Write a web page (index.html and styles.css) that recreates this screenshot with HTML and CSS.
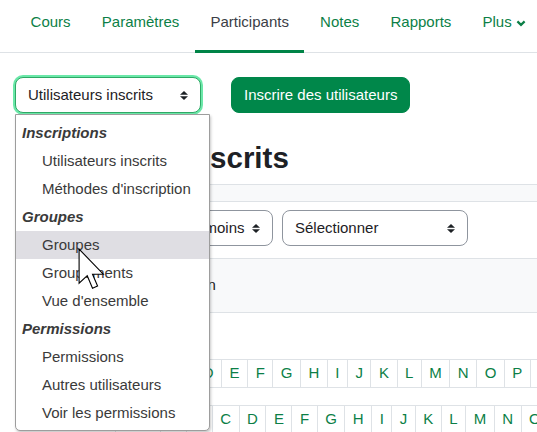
FILE: index.html
```html
<!DOCTYPE html>
<html lang="fr">
<head>
<meta charset="utf-8">
<title>Participants</title>
<link rel="stylesheet" href="styles.css">
</head>
<body>
<nav class="tabs">
  <ul class="tab-list">
    <li><a class="tab">Cours</a></li>
    <li><a class="tab">Paramètres</a></li>
    <li><a class="tab active">Participants</a></li>
    <li><a class="tab">Notes</a></li>
    <li><a class="tab">Rapports</a></li>
    <li><a class="tab">Plus<svg class="chev" viewBox="0 0 10 7" width="10" height="7"><polyline points="1.4,1.4 5,4.9 8.6,1.4" fill="none" stroke="currentColor" stroke-width="2.2"/></svg></a></li>
  </ul>
</nav>
<main class="page">
  <div class="toolbar">
    <div class="select select-main focused"><span>Utilisateurs inscrits</span><svg class="arrows" viewBox="0 0 8 9" width="8" height="9"><polygon points="0,3.8 4,0 8,3.8"/><polygon points="0,5.2 4,9 8,5.2"/></svg></div>
    <button class="btn">Inscrire des utilisateurs</button>
  </div>
  <h2 class="title">Utilisateurs inscrits</h2>
  <div class="filters">
    <div class="f-top"></div>
    <div class="f-row">
      <span class="f-label">Correspondance</span>
      <div class="select select-join"><span>Au moins</span><svg class="arrows" viewBox="0 0 8 9" width="8" height="9"><polygon points="0,3.8 4,0 8,3.8"/><polygon points="0,5.2 4,9 8,5.2"/></svg></div>
      <div class="select select-type"><span>Sélectionner</span><svg class="arrows" viewBox="0 0 8 9" width="8" height="9"><polygon points="0,3.8 4,0 8,3.8"/><polygon points="0,5.2 4,9 8,5.2"/></svg></div>
    </div>
    <div class="f-foot">Ajouter une condition</div>
  </div>
  <div class="initials">
    <div class="ibar">
      <span class="ibar-label">Prénom</span>
      <ul class="pages">
        <li class="all">Tout</li><li>A</li><li>B</li><li>C</li><li>D</li><li>E</li><li>F</li><li>G</li><li>H</li><li>I</li><li>J</li><li>K</li><li>L</li><li>M</li><li>N</li><li>O</li><li>P</li><li>Q</li><li>R</li><li>S</li><li>T</li>
      </ul>
    </div>
    <div class="ibar">
      <span class="ibar-label">Nom de famille</span>
      <ul class="pages">
        <li class="all">Tout</li><li>A</li><li>B</li><li>C</li><li>D</li><li>E</li><li>F</li><li>G</li><li>H</li><li>I</li><li>J</li><li>K</li><li>L</li><li>M</li><li>N</li><li>O</li><li>P</li><li>Q</li><li>R</li>
      </ul>
    </div>
  </div>
</main>

<div class="popup">
  <div class="og">Inscriptions</div>
  <div class="opt">Utilisateurs inscrits</div>
  <div class="opt">Méthodes d'inscription</div>
  <div class="og">Groupes</div>
  <div class="opt hover">Groupes</div>
  <div class="opt">Groupements</div>
  <div class="opt">Vue d'ensemble</div>
  <div class="og">Permissions</div>
  <div class="opt">Permissions</div>
  <div class="opt">Autres utilisateurs</div>
  <div class="opt">Voir les permissions</div>
</div>

<svg class="cursor" viewBox="0 0 13 20" width="28.6" height="44"><polygon points="0.5,0.5 0.5,16 4.2,12.6 6.6,18.3 8.9,17.3 6.6,11.9 11.5,11.9" fill="#fff" stroke="#000" stroke-width="0.5" stroke-linejoin="miter"/></svg>
</body>
</html>
```
FILE: styles.css
```css
* { box-sizing: border-box; }
html, body { margin: 0; padding: 0; overflow: hidden; }
body {
  font-family: "Liberation Sans", Arial, sans-serif;
  font-size: 15px;
  line-height: 1.5;
  color: #1d2125;
  background: #fff;
  width: 537px;
  height: 432px;
  position: relative;
}

/* top tabs */
.tabs { border-bottom: 1px solid #dee2e6; }
.tab-list {
  list-style: none;
  margin: 0;
  padding: 0 0 0 15px;
  display: flex;
  height: 52px;
}
.tab {
  display: flex;
  align-items: center;
  height: 53px;
  padding: 0 15.6px 5px;
  border-bottom: 3px solid transparent;
  color: #0c7f47;
  line-height: 22.5px;
  white-space: nowrap;
  text-decoration: none;
}
.tab.active { color: #3b3e46; border-bottom-color: #008447; }
.chev { margin-left: 4px; margin-top: 1px; }

/* page */
.page { padding-left: 15px; }
.toolbar {
  display: flex;
  align-items: flex-start;
  gap: 30px;
  margin-top: 24px;
}
.select {
  height: 36px;
  border: 1px solid #8f959e;
  border-radius: 8px;
  padding: 0 12px;
  display: flex;
  align-items: center;
  justify-content: space-between;
  background: #fff;
  color: #1d2125;
  white-space: nowrap;
}
.arrows { fill: #1d2125; flex-shrink: 0; }
.select-main { width: 186px; }
.select.focused {
  border-color: #2fa866;
  box-shadow: 0 0 0 2px #6be8a9;
}
.btn {
  height: 36px;
  padding: 0 12px;
  background: #00874a;
  color: #fff;
  border: 1px solid #00874a;
  border-radius: 8px;
  font: inherit;
  line-height: 22.5px;
}
.title {
  margin: 27px 0 8px;
  font-size: 29.5px;
  line-height: 36px;
  font-weight: bold;
  color: #1d2125;
}

/* filters */
.filters { border-top: 1px solid #dee2e6; }
.f-top { height: 17px; background: #f8f9fa; border-bottom: 1px solid #dee2e6; }
.f-row {
  height: 57px;
  padding: 8px 0 0 8px;
  display: flex;
  align-items: flex-start;
  gap: 9px;
  border-bottom: 1px solid #dee2e6;
}
.f-label { width: 137px; line-height: 36px; }
.select-join { width: 104px; }
.select-type { width: 186px; }
.f-foot {
  height: 54px;
  background: #f8f9fa;
  border-bottom: 1px solid #dee2e6;
  display: flex;
  align-items: center;
  padding-left: 60px;
  color: #1d2125;
}

/* initials bar */
.initials { margin-top: 46px; }
.ibar {
  display: flex;
  align-items: center;
  margin-bottom: 17px;
  white-space: nowrap;
}
.ibar-label { font-size: 14px; margin-right: 7px; flex-shrink: 0; }
.pages {
  display: flex;
  list-style: none;
  margin: 0;
  padding: 0;
  flex-shrink: 0;
}
.pages li {
  padding: 4px 7.5px;
  line-height: 18.75px;
  border: 1px solid #dee2e6;
  margin-left: -1px;
  color: #0c7f47;
  background: #fff;
}
.pages li:first-child { margin-left: 0; }
.pages li.all { color: #1d2125; }

/* native select popup */
.popup {
  position: absolute;
  left: 15px;
  top: 114px;
  width: 195px;
  padding: 4px 0 3px;
  background: #fff;
  border: 1px solid #9d9d9d;
  border-radius: 0 0 5px 5px;
  box-shadow: 1px 2px 3px rgba(0, 0, 0, 0.22);
  color: #3a3a3a;
}
.og {
  height: 28px;
  line-height: 28px;
  padding-left: 6px;
  font-weight: bold;
  font-style: italic;
  color: #3a3a3a;
}
.opt {
  height: 28px;
  line-height: 28px;
  padding-left: 26px;
  white-space: nowrap;
}
.opt.hover { background: #dfdee3; }

.cursor { position: absolute; left: 78px; top: 248px; }
```
